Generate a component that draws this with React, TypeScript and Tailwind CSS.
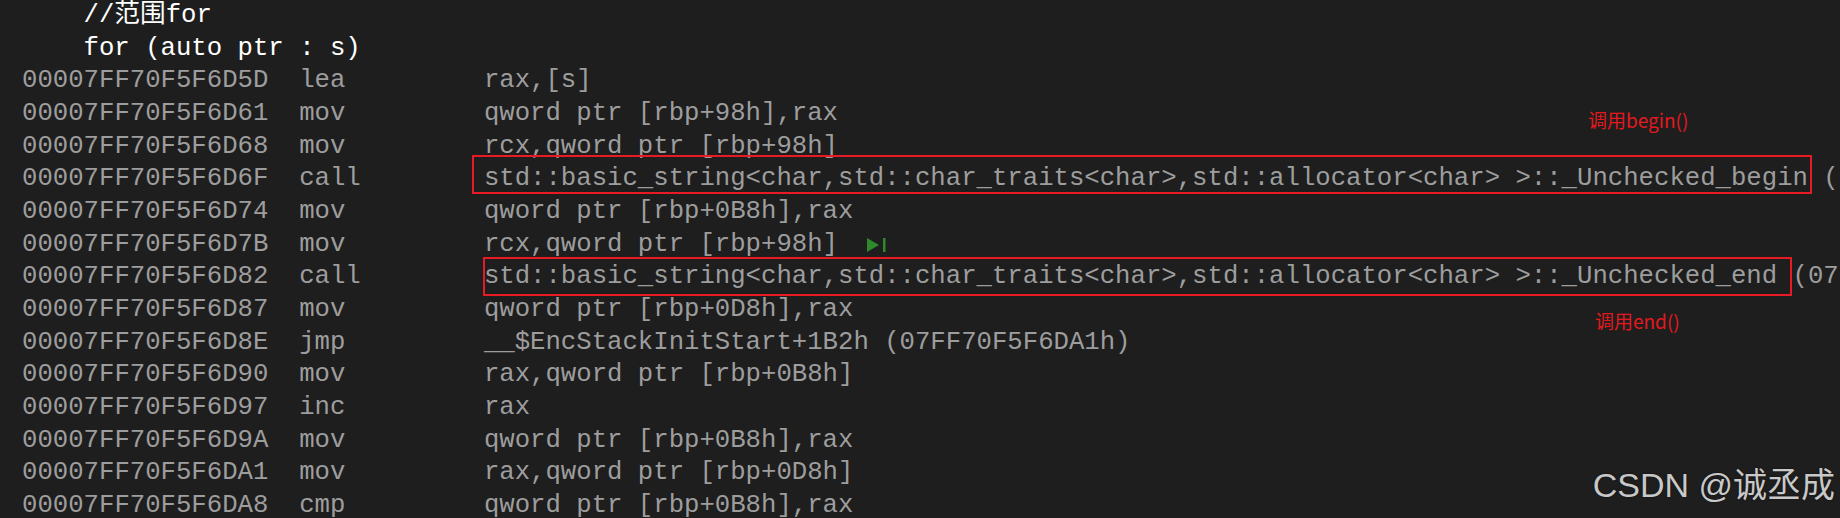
import React from 'react';

// --- Data ---
type AsmRow = { addr: string; op: string; args: string; mark?: boolean };

const source = ['//范围for', 'for (auto ptr : s)'];

const rows: AsmRow[] = [
  { addr: '00007FF70F5F6D5D', op: 'lea', args: 'rax,[s]' },
  { addr: '00007FF70F5F6D61', op: 'mov', args: 'qword ptr [rbp+98h],rax' },
  { addr: '00007FF70F5F6D68', op: 'mov', args: 'rcx,qword ptr [rbp+98h]' },
  { addr: '00007FF70F5F6D6F', op: 'call', args: 'std::basic_string<char,std::char_traits<char>,std::allocator<char> >::_Unchecked_begin (' },
  { addr: '00007FF70F5F6D74', op: 'mov', args: 'qword ptr [rbp+0B8h],rax' },
  { addr: '00007FF70F5F6D7B', op: 'mov', args: 'rcx,qword ptr [rbp+98h]', mark: true },
  { addr: '00007FF70F5F6D82', op: 'call', args: 'std::basic_string<char,std::char_traits<char>,std::allocator<char> >::_Unchecked_end (07' },
  { addr: '00007FF70F5F6D87', op: 'mov', args: 'qword ptr [rbp+0D8h],rax' },
  { addr: '00007FF70F5F6D8E', op: 'jmp', args: '__$EncStackInitStart+1B2h (07FF70F5F6DA1h)' },
  { addr: '00007FF70F5F6D90', op: 'mov', args: 'rax,qword ptr [rbp+0B8h]' },
  { addr: '00007FF70F5F6D97', op: 'inc', args: 'rax' },
  { addr: '00007FF70F5F6D9A', op: 'mov', args: 'qword ptr [rbp+0B8h],rax' },
  { addr: '00007FF70F5F6DA1', op: 'mov', args: 'rax,qword ptr [rbp+0D8h]' },
  { addr: '00007FF70F5F6DA8', op: 'cmp', args: 'qword ptr [rbp+0B8h],rax' },
];

// --- Run-to-click glyph ---
const RunToClick = () => (
  <svg width="20" height="14" viewBox="0 0 20 14" className="inline-block ml-[29px] align-[-1px]">
    <polygon points="0,0 12,7 0,14" fill="#2f8a2c" />
    <rect x="16" y="0" width="2.5" height="14" fill="#2f8a2c" />
  </svg>
);

export default function App() {
  return (
    <div
      className="relative w-[1840px] h-[518px] overflow-hidden bg-[#1e1e1e] pl-[22px] text-[25.67px] leading-[32.65px] whitespace-pre"
      style={{ fontFamily: '"Liberation Mono", "Noto Sans CJK SC", monospace' }}
    >
      {source.map((line) => (
        <div key={line} className="text-white pl-[4ch]">{line}</div>
      ))}
      {rows.map((r) => (
        <div key={r.addr} className="flex text-[#9d9d9d]">
          <span className="w-[18ch] shrink-0">{r.addr}</span>
          <span className="w-[12ch] shrink-0">{r.op}</span>
          <span className="shrink-0">
            {r.args}
            {r.mark && <RunToClick />}
          </span>
        </div>
      ))}

      {/* annotation boxes */}
      <div className="absolute left-[472px] top-[155px] w-[1340px] h-[39px] border-2 border-[#e81b24]" />
      <div className="absolute left-[483px] top-[257px] w-[1309px] h-[39px] border-2 border-[#e81b24]" />
      <div
        className="absolute left-[1588px] top-[110px] text-[19px] leading-none text-[#e3191f]"
        style={{ fontFamily: '"Noto Sans CJK SC", sans-serif' }}
      >
        调用begin()
      </div>
      <div
        className="absolute left-[1595px] top-[311px] text-[19px] leading-none text-[#e3191f]"
        style={{ fontFamily: '"Noto Sans CJK SC", sans-serif' }}
      >
        调用end()
      </div>

      {/* watermark */}
      <div
        className="absolute right-[5px] top-[468px] text-[34px] leading-none text-[#c8c8c8] [text-shadow:0_0_2px_rgba(0,0,0,0.6)]"
        style={{ fontFamily: '"Liberation Sans", "Noto Sans CJK SC", sans-serif' }}
      >
        CSDN @诚丞成
      </div>
    </div>
  );
}
